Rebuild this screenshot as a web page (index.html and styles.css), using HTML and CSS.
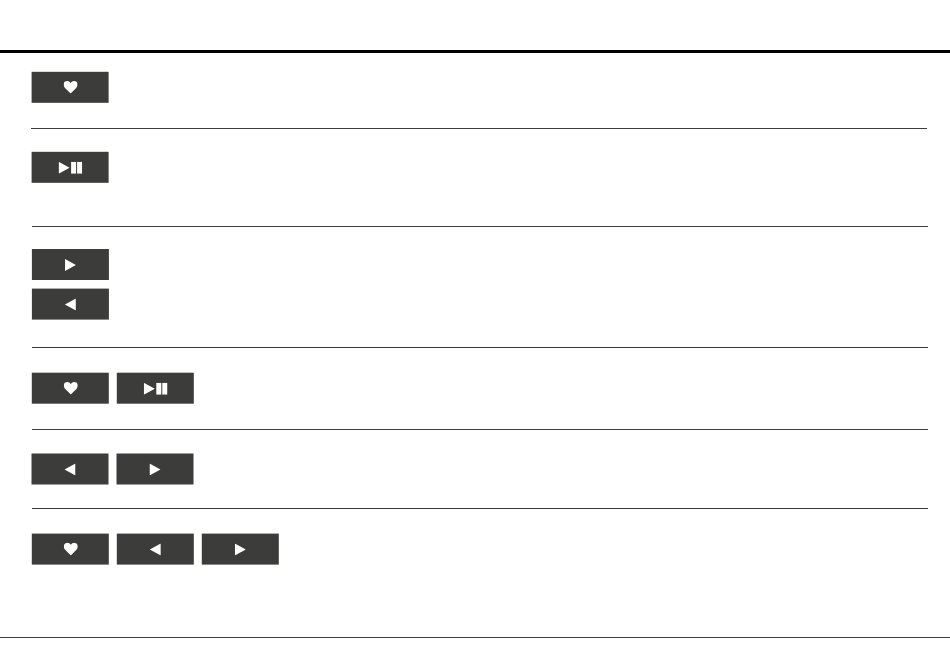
FILE: index.html

```html
<!DOCTYPE html>
<html lang="en">
<head>
  <meta charset="UTF-8" />
  <meta name="viewport" content="width=device-width, initial-scale=1.0"/>
  <title>Player Buttons</title>
  <link rel="stylesheet" href="styles.css">
</head>
<body>

  <svg class="defs" aria-hidden="true">
    <symbol id="heart" viewBox="0 0 14 13">
      <path d="M7 12.800 1.400 7.200C-.6 5-.3 1.900 1.500.8 3.500-.4 5.800.3 7 2.200 8.200.3 10.500-.4 12.500.8c1.800 1.100 2.100 4.200.1 6.400z"/>
    </symbol>
    <symbol id="play" viewBox="0 0 11 12">
      <path d="M0 0 11 6 0 12z"/>
    </symbol>
    <symbol id="back" viewBox="0 0 11 12">
      <path d="M11 0 0 6 11 12z"/>
    </symbol>
    <symbol id="playpause" viewBox="0 0 24 12">
      <path d="M0 0 11 6 0 12zM12.500 0h5v12h-5zM18.500 0h5v12h-5z"/>
    </symbol>
  </svg>

  <header class="top-bar"></header>

  <main class="rows">
    <!-- single buttons -->
    <section class="row row-like">
      <button class="ctrl" aria-label="Like"><svg class="ico-heart"><use href="#heart"/></svg></button>
    </section>

    <section class="row row-toggle">
      <button class="ctrl" aria-label="Play or pause"><svg class="ico-playpause"><use href="#playpause"/></svg></button>
    </section>

    <!-- stacked -->
    <section class="row row-stack">
      <button class="ctrl" aria-label="Next"><svg class="ico-arrow"><use href="#play"/></svg></button>
      <button class="ctrl" aria-label="Previous"><svg class="ico-arrow"><use href="#back"/></svg></button>
    </section>

    <!-- side by side -->
    <section class="row row-pair">
      <button class="ctrl" aria-label="Like"><svg class="ico-heart"><use href="#heart"/></svg></button>
      <button class="ctrl" aria-label="Play or pause"><svg class="ico-playpause"><use href="#playpause"/></svg></button>
    </section>

    <section class="row row-nav">
      <button class="ctrl" aria-label="Previous"><svg class="ico-arrow"><use href="#back"/></svg></button>
      <button class="ctrl" aria-label="Next"><svg class="ico-arrow"><use href="#play"/></svg></button>
    </section>

    <section class="row row-last">
      <button class="ctrl" aria-label="Like"><svg class="ico-heart"><use href="#heart"/></svg></button>
      <button class="ctrl" aria-label="Previous"><svg class="ico-arrow"><use href="#back"/></svg></button>
      <button class="ctrl" aria-label="Next"><svg class="ico-arrow"><use href="#play"/></svg></button>
    </section>
  </main>

  <footer class="bottom-bar"></footer>

</body>
</html>
```

FILE: styles.css

```css
body {
  margin: 0;
  padding: 0;
  background: #fff;
  font-family: 'Liberation Sans', sans-serif;
}
.defs {
  display: none;
}
.top-bar {
  height: 50px;
  border-bottom: 3px solid #000;
}
.rows {
  width: 896px;
  margin-left: 32px;
}
.row {
  display: flex;
  gap: 8px;
  border-bottom: 1px solid #3c3c3a;
}
.row-like {
  margin: 0 1px 0 -1px;
  padding: 19px 0 25px;
}
.row-toggle {
  padding: 23px 0 43px;
}
.row-stack {
  flex-direction: column;
  gap: 9px;
  padding: 22px 0 27px;
}
.row-pair {
  padding: 25px 0 25px;
}
.row-nav {
  padding: 24px 0 23px;
}
.row-last {
  padding: 25px 0 72px;
  border-bottom: none;
}
.ctrl {
  display: flex;
  justify-content: center;
  align-items: center;
  width: 77px;
  height: 31px;
  padding: 0;
  border: none;
  background: #3c3c3a;
  fill: #fff;
}
/* the buttons sit on sub-pixel positions */
.row-like .ctrl {
  transform: translate(.6px, -.2px);
}
.row-toggle .ctrl {
  transform: translate(-.4px, -.2px);
}
.row-stack .ctrl {
  transform: translateX(-.1px);
}
.row-stack .ctrl:last-child {
  transform: translate(-.1px, -.4px);
}
.row-pair .ctrl {
  transform: translate(-.2px, -.3px);
}
.row-nav .ctrl {
  transform: translate(-.5px, -.5px);
}
.row-last .ctrl {
  transform: translate(-.2px, -.4px);
}
.ico-heart {
  width: 14px;
  height: 13px;
}
.ico-playpause {
  width: 24px;
  height: 12px;
}
.ico-arrow {
  width: 11px;
  height: 12px;
}
.bottom-bar {
  border-top: 1px solid #3c3c3a;
}
```
